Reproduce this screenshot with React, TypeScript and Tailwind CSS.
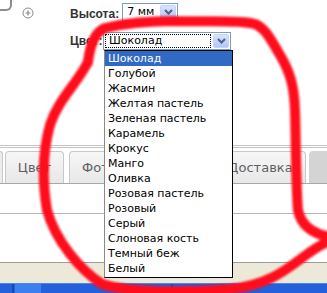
import React from "react";

const colors = [
  "Шоколад",
  "Голубой",
  "Жасмин",
  "Желтая пастель",
  "Зеленая пастель",
  "Карамель",
  "Крокус",
  "Манго",
  "Оливка",
  "Розовая пастель",
  "Розовый",
  "Серый",
  "Слоновая кость",
  "Темный беж",
  "Белый",
];

function Chevron() {
  return (
    <svg width="9" height="6" viewBox="0 0 9 6">
      <path d="M1 1 L4.5 4.5 L8 1" fill="none" stroke="#4d6185" strokeWidth="2" />
    </svg>
  );
}

function XpSelect({ value, width, focused }: { value: string; width: string; focused?: boolean }) {
  return (
    <div className={`${width} h-[18px] border border-[#7f9db9] bg-white flex items-stretch`}>
      <div className="flex-1 p-px flex">
        <div
          className={`flex-1 flex items-center pl-[3px] text-[11px] text-black ${
            focused ? "border border-dotted border-black" : ""
          }`}
        >
          {value}
        </div>
      </div>
      <div className="w-[16px] m-px rounded-[2px] border border-[#c3d3fd] bg-gradient-to-b from-[#d8e3fd] to-[#b3c8f5] flex items-center justify-center">
        <Chevron />
      </div>
    </div>
  );
}

export default function App() {
  return (
    <div
      className="relative w-[327px] h-[293px] overflow-hidden bg-white"
      style={{ fontFamily: '"DejaVu Sans", sans-serif' }}
    >
      {/* form */}
      <div className="h-[145px]">
        <div className="flex items-start h-[21px]">
          <div className="w-[12px] h-[11px] border-r-2 border-b-2 border-[#8c8c8c] rounded-br-[6px]" />
          <svg className="ml-[10px] mt-[7px]" width="12" height="12" viewBox="0 0 12 12">
            <circle cx="6" cy="6" r="5" fill="none" stroke="#8a8a8a" strokeWidth="1" />
            <path d="M3.5 6 H8.5 M6 3.5 V8.5" stroke="#8a8a8a" strokeWidth="1.2" />
          </svg>
          <span
            className="ml-[36px] mt-[5px] text-[12px] font-bold text-[#333]"
            style={{ fontFamily: '"Liberation Sans", sans-serif' }}
          >
            Высота:
          </span>
          <div className="ml-[3px] mt-[3px]">
            <XpSelect value="7 мм" width="w-[56px]" />
          </div>
        </div>
        <div className="flex items-center mt-[11px] h-[18px]">
          <span
            className="ml-[70px] text-[12px] font-bold text-[#333] w-[33px]"
            style={{ fontFamily: '"Liberation Sans", sans-serif' }}
          >
            Цвет:
          </span>
          <XpSelect value="Шоколад" width="w-[128px]" focused />
        </div>
      </div>

      {/* tab strip */}
      <div className="h-px bg-[#c4c4c4]" />
      <div className="h-px bg-white" />
      <div className="h-px bg-[#c4c4c4]" />
      <div className="h-[3px]" />
      <div className="h-[32px] flex items-stretch text-[13px] text-[#5f5f5f]">
        <div className="w-[3px] rounded-tr-[4px] border border-l-0 border-b-0 border-[#c8c8c8] bg-[#ececec]" />
        <div className="ml-[2px] w-[59px] rounded-t-[4px] border border-b-0 border-[#c8c8c8] bg-gradient-to-b from-[#f6f6f6] to-[#e8e8e8] flex items-center justify-center">
          Цвет
        </div>
        <div className="ml-[5px] w-[80px] rounded-t-[4px] border border-b-0 border-[#c8c8c8] bg-gradient-to-b from-[#f6f6f6] to-[#e8e8e8] flex items-center pl-[12px]">
          Фото
        </div>
        <div className="ml-[5px] w-[56px] rounded-t-[4px] border border-b-0 border-[#c8c8c8] bg-gradient-to-b from-[#f6f6f6] to-[#e8e8e8]" />
        <div className="ml-[5px] w-[91px] rounded-t-[4px] border border-b-0 border-[#c8c8c8] bg-gradient-to-b from-[#f6f6f6] to-[#e8e8e8] flex items-center justify-center">
          Доставка
        </div>
        <div className="ml-[3px] flex-1 rounded-tl-[4px] bg-[#d4d4d4]" />
      </div>
      <div className="h-px bg-[#a8a8a8]" />
      <div className="h-[29px]" />
      <div className="h-px bg-[#b4b4b4]" />
      <div className="h-[48px]" />
      <div className="h-px bg-[#9c9c9c]" />
      <div className="h-[20px] bg-[#ece9d8]" />
      <div className="h-[10px] bg-[#2560dc] border-t border-[#4a86f0] flex">
        <div className="ml-[12px] w-[2px] bg-[#1a47b0]" />
        <div className="ml-px w-[26px] bg-[#3b7ff0]" />
        <div className="ml-[130px] w-[2px] bg-[#1a47b0]" />
        <div className="ml-[14px] mt-[3px] w-[6px] h-[6px] rounded-full bg-[#e07040]" />
      </div>

      {/* open dropdown list */}
      <div className="absolute left-[104px] top-[50px] w-[129px] h-[228px] border border-black border-l-[#8a8a8a] bg-white text-[11px] text-black">
        {colors.map((c, i) => (
          <div
            key={c}
            className={`h-[15px] leading-[15px] pl-[3px] ${i === 0 ? "bg-[#316ac5] text-white" : ""}`}
          >
            {c}
          </div>
        ))}
      </div>

      {/* red annotation */}
      <svg className="absolute inset-0 pointer-events-none" width="327" height="293" viewBox="0 0 327 293">
        <defs>
          <filter id="soft">
            <feGaussianBlur stdDeviation="0.9" />
          </filter>
        </defs>
        <g fill="none" stroke="#ff0a1e" strokeWidth="10" strokeLinecap="round" filter="url(#soft)">
          <path d="M88 62 C90 45 95 32 105 28 C130 22 150 21 175 21 C210 22 240 20 255 24 C265 28 270 38 280 55 C290 72 294 85 295 110 C296 140 296 190 298 210 C301 226 314 234 330 237" />
          <path d="M330 241 C300 252 285 284 230 289 C180 293 125 292 102 284 C80 270 55 240 47 210 C42 180 43 150 50 125 C58 100 76 85 88 62" />
        </g>
      </svg>
    </div>
  );
}
